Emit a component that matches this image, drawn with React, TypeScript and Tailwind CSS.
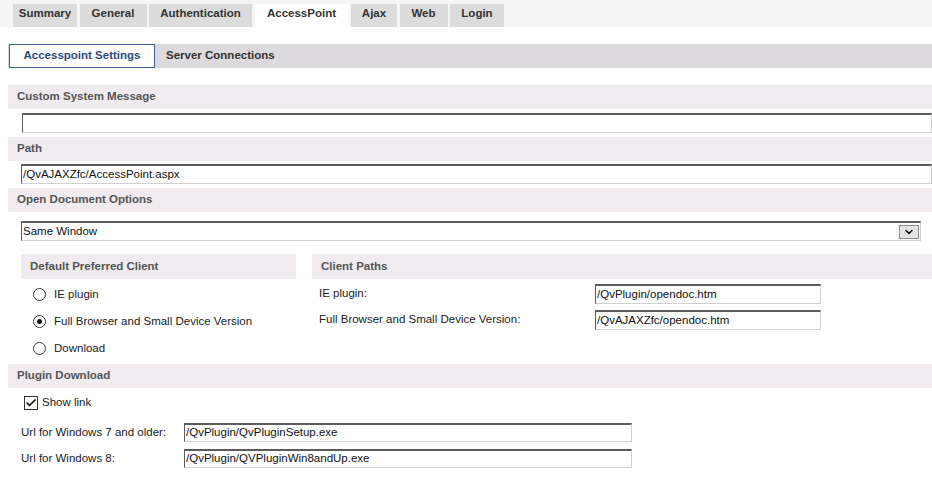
import { ChevronDown, Check } from "lucide-react";

const TABS = [
  { name: "Summary", w: "w-[64px]" },
  { name: "General", w: "w-[67px]" },
  { name: "Authentication", w: "w-[103px]" },
  { name: "AccessPoint", w: "w-[94px]", active: true },
  { name: "Ajax", w: "w-[46px]" },
  { name: "Web", w: "w-[48px]" },
  { name: "Login", w: "w-[54px]" },
];

const inputCls =
  "flex items-center pl-[1px] bg-white border-t-2 border-t-[#5c5c5c] border-l border-l-[#5c5c5c] border-r border-r-[#d0d0d0] border-b border-b-[#d0d0d0] text-[#111] text-[11.5px] leading-none";

function Band({ title, className = "" }: { title: string; className?: string }) {
  return (
    <div className={`h-[24px] bg-[#efebef] flex items-center pl-[9px] font-bold text-[11.5px] text-[#555] ${className}`}>
      {title}
    </div>
  );
}

function Radio({ label, checked }: { label: string; checked?: boolean }) {
  return (
    <div className="h-[27px] flex items-center">
      <span className="ml-[12px] w-[13px] h-[13px] rounded-full border border-[#3a3a3a] bg-white flex items-center justify-center">
        {checked && <span className="w-[5px] h-[5px] rounded-full bg-[#111]" />}
      </span>
      <span className="ml-[8px] text-[11.5px] text-[#222]">{label}</span>
    </div>
  );
}

export default function App() {
  return (
    <div className="w-[932px] h-[478px] bg-white overflow-hidden font-['Liberation_Sans',Arial,sans-serif]">
      {/* top tabs */}
      <div className="h-[27px] bg-[#f5f5f5] flex items-end pl-[13px] gap-[2.5px]">
        {TABS.map((t) => (
          <div
            key={t.name}
            className={`${t.w} h-[23px] flex justify-center pt-[2px] leading-[14px] font-bold text-[11.5px] text-[#333] ${t.active ? "bg-white" : "bg-[#dcdcdc]"}`}
          >
            {t.name}
          </div>
        ))}
      </div>

      {/* sub tabs */}
      <div className="mt-[17px] ml-[8px] h-[24px] bg-[#dcdadd] flex items-stretch">
        <div className="ml-[1px] w-[146px] bg-white border border-[#3f5f95] flex items-center justify-center font-bold text-[11.5px] text-[#2d4a7d]">
          Accesspoint Settings
        </div>
        <div className="ml-[11px] flex items-center font-bold text-[11.5px] text-[#333]">Server Connections</div>
      </div>

      <Band title="Custom System Message" className="mt-[17px] ml-[8px]" />
      <div className={`${inputCls} mt-[4px] ml-[22px] h-[20px]`} />

      <Band title="Path" className="mt-[4px] ml-[8px]" />
      <div className={`${inputCls} mt-[3px] ml-[21px] h-[20px]`}>/QvAJAXZfc/AccessPoint.aspx</div>

      <Band title="Open Document Options" className="mt-[4px] ml-[8px]" />
      <div className={`${inputCls} mt-[9px] ml-[21px] w-[900px] h-[20px] justify-between`}>
        <span>Same Window</span>
        <span className="mr-[1px] w-[20px] h-[14px] bg-[#e4e4e4] border border-[#8a8a8a] flex items-center justify-center">
          <ChevronDown size={12} strokeWidth={3} className="text-[#111]" />
        </span>
      </div>

      {/* two columns */}
      <div className="mt-[13px] flex">
        <div className="ml-[21px] w-[275px]">
          <Band title="Default Preferred Client" className="h-[25px]" />
          <div className="pt-[2px]">
            <Radio label="IE plugin" />
            <Radio label="Full Browser and Small Device Version" checked />
            <Radio label="Download" />
          </div>
        </div>
        <div className="ml-[16px] flex-1">
          <Band title="Client Paths" className="h-[25px]" />
          <div className="mt-[5px] flex flex-col gap-[6px]">
            {[
              ["IE plugin:", "/QvPlugin/opendoc.htm"],
              ["Full Browser and Small Device Version:", "/QvAJAXZfc/opendoc.htm"],
            ].map(([label, value]) => (
              <div key={label} className="h-[20px] flex items-center">
                <span className="ml-[7px] w-[276px] text-[11.5px] text-[#222]">{label}</span>
                <div className={`${inputCls} w-[226px] h-[20px]`}>{value}</div>
              </div>
            ))}
          </div>
        </div>
      </div>

      <Band title="Plugin Download" className="mt-[2px] ml-[8px]" />
      <div className="mt-[8px] ml-[24px] h-[14px] flex items-center">
        <span className="w-[14px] h-[14px] border border-[#333] bg-white flex items-center justify-center">
          <Check size={12} strokeWidth={3.5} className="text-[#111]" />
        </span>
        <span className="ml-[4px] text-[11.5px] text-[#222]">Show link</span>
      </div>

      <div className="mt-[13px] flex flex-col gap-[7px]">
        {[
          ["Url for Windows 7 and older:", "/QvPlugin/QvPluginSetup.exe"],
          ["Url for Windows 8:", "/QvPlugin/QVPluginWin8andUp.exe"],
        ].map(([label, value]) => (
          <div key={label} className="h-[19px] flex items-center">
            <span className="ml-[21px] w-[163px] text-[11.5px] text-[#222]">{label}</span>
            <div className={`${inputCls} w-[448px] h-[19px]`}>{value}</div>
          </div>
        ))}
      </div>
    </div>
  );
}
